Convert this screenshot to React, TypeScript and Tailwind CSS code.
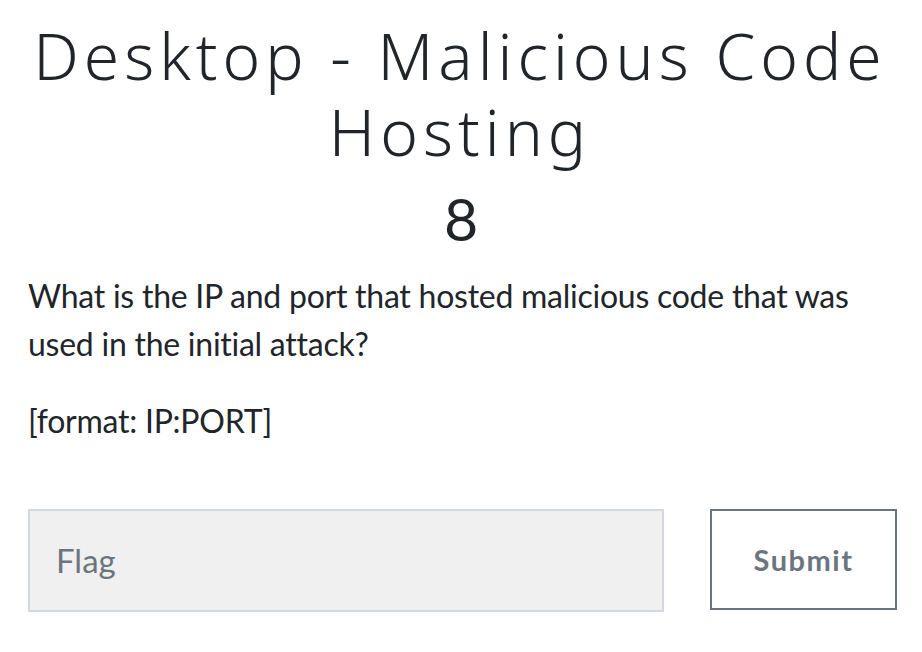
import React from "react";

export default function App() {
  return (
    <div className="w-[922px] h-[652px] bg-white overflow-hidden">
      <div className="pt-[18px] pl-[28px] pr-[24px]">
        <h2 className="mr-[6px] text-center text-[64px] leading-[76px] tracking-[5px] text-[#212529] font-light [font-family:'Noto_Sans',sans-serif]">
          Desktop - Malicious Code Hosting
        </h2>
        <h3 className="mr-[4px] text-center text-[59px] leading-[67px] text-[#212529] mt-[15px] [font-family:Lato,sans-serif]">
          8
        </h3>
        <p className="mt-[20px] text-[32px] leading-[48px] tracking-[-0.25px] text-[#212529] [font-family:Lato,sans-serif]">
          What is the IP and port that hosted malicious code that was used in the initial attack?
        </p>
        <p className="mt-[29px] text-[32px] leading-[48px] tracking-[-0.25px] text-[#212529] [font-family:Lato,sans-serif]">
          [format: IP:PORT]
        </p>
        <div className="mt-[64px] flex items-start">
          <div className="shrink-0 w-[636px] h-[103px] bg-[#f0f0f0] border-2 border-[#d2d8df] flex items-center pl-[26px]">
            <span className="text-[33px] text-[#6c757d] [font-family:Lato,sans-serif]">Flag</span>
          </div>
          <div className="shrink-0 ml-[46px] w-[187px] h-[101px] border-2 border-[#6c757d] flex items-center justify-center">
            <span className="text-[29px] font-bold tracking-[1.5px] text-[#6c757d] [font-family:Lato,sans-serif]">Submit</span>
          </div>
        </div>
      </div>
    </div>
  );
}
